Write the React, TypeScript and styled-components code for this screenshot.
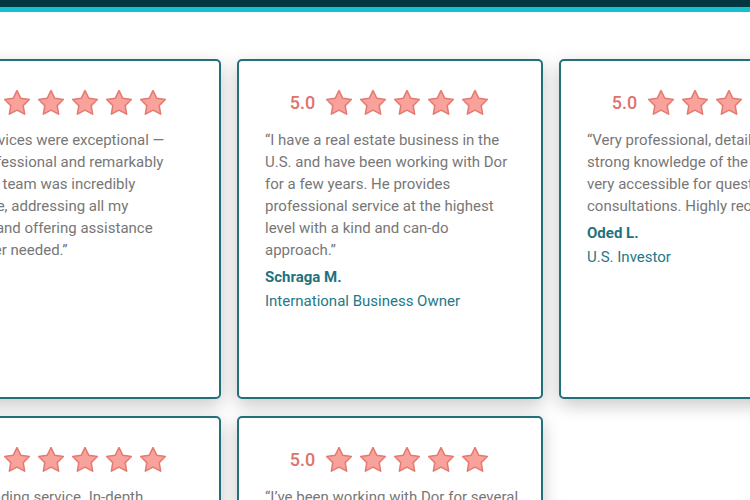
import React from "react";
import styled, { createGlobalStyle } from "styled-components";

const GlobalStyle = createGlobalStyle`
  html, body {
    margin: 0;
    padding: 0;
    background: #ffffff;
    overflow: hidden;
  }
  body {
    font-family: Roboto, "Liberation Sans", Arial, sans-serif;
  }
`;

const reviews = [
  {
    quote:
      "“The services were exceptional —\nvery professional and remarkably\nfast. His team was incredibly\nproactive, addressing all my\nqueries and offering assistance\nwhenever needed.”",
    name: "Dana K.",
    role: "Investor",
  },
  {
    quote:
      "“I have a real estate business in the U.S. and have been working with Dor for a few years. He provides professional service at the highest level with a kind and can-do approach.”",
    name: "Schraga M.",
    role: "International Business Owner",
  },
  {
    quote:
      "“Very professional, detailed, with\nstrong knowledge of the field, and\nvery accessible for questions and\nconsultations. Highly recommended!”",
    name: "Oded L.",
    role: "U.S. Investor",
  },
  {
    quote:
      "“Outstanding service. In-depth\nknowledge of U.S. tax law and a\ngenuine commitment to every client.”",
    name: "Yael S.",
    role: "Business Owner",
  },
  {
    quote:
      "“I’ve been working with Dor for several years now and the service has always been excellent.”",
    name: "Moshe K.",
    role: "Entrepreneur",
  },
];

const TopBar = styled.header`
  height: 7px;
  background: #04363f;
  border-bottom: 5px solid #15c0cf;
`;

const Section = styled.section`
  padding-top: 47px;
`;

const Grid = styled.div`
  display: grid;
  grid-template-columns: repeat(3, 306px);
  column-gap: 16px;
  row-gap: 17px;
  margin-left: -85px;
`;

const Card = styled.article`
  box-sizing: border-box;
  min-height: 340px;
  padding: 29px 20px 20px 26px;
  background: #ffffff;
  border: 2px solid #23707d;
  border-radius: 5px;
  box-shadow: 0 6px 18px rgba(0, 0, 0, 0.22);
`;

const Rating = styled.div`
  display: flex;
  align-items: center;
  justify-content: center;
  gap: 8px;
  margin: 0 0 14px -8px;
`;

const Score = styled.span`
  margin-right: 3px;
  font-size: 18px;
  font-weight: 500;
  color: #e0726b;
`;

const Quote = styled.p`
  margin: 0 0 5px;
  font-size: 15px;
  line-height: 22px;
  color: #777777;
  white-space: pre-line;
`;

const Name = styled.div`
  font-size: 15px;
  line-height: 22px;
  font-weight: 700;
  color: #1f7380;
`;

const Role = styled.div`
  margin-top: 2px;
  font-size: 15px;
  line-height: 22px;
  color: #22798a;
`;

const Star = () => (
  <svg width="26" height="25" viewBox="2 1.8 20 19.4">
    <path
      d="M12 2.2l2.95 6.05 6.65.97-4.8 4.7 1.13 6.62L12 17.4l-5.93 3.14 1.13-6.62-4.8-4.7 6.65-.97z"
      fill="#f9a29b"
      stroke="#e47a71"
      strokeWidth="1.2"
      strokeLinejoin="round"
    />
  </svg>
);

const Review = ({
  quote,
  name,
  role,
}: {
  quote: string;
  name: string;
  role: string;
}) => (
  <Card>
    <Rating>
      <Score>5.0</Score>
      {[0, 1, 2, 3, 4].map((i) => (
        <Star key={i} />
      ))}
    </Rating>
    <Quote>{quote}</Quote>
    <Name>{name}</Name>
    <Role>{role}</Role>
  </Card>
);

export default function App() {
  return (
    <>
      <GlobalStyle />
      <TopBar />
      <Section>
        <Grid>
          {reviews.map((r) => (
            <Review key={r.name} {...r} />
          ))}
        </Grid>
      </Section>
    </>
  );
}
